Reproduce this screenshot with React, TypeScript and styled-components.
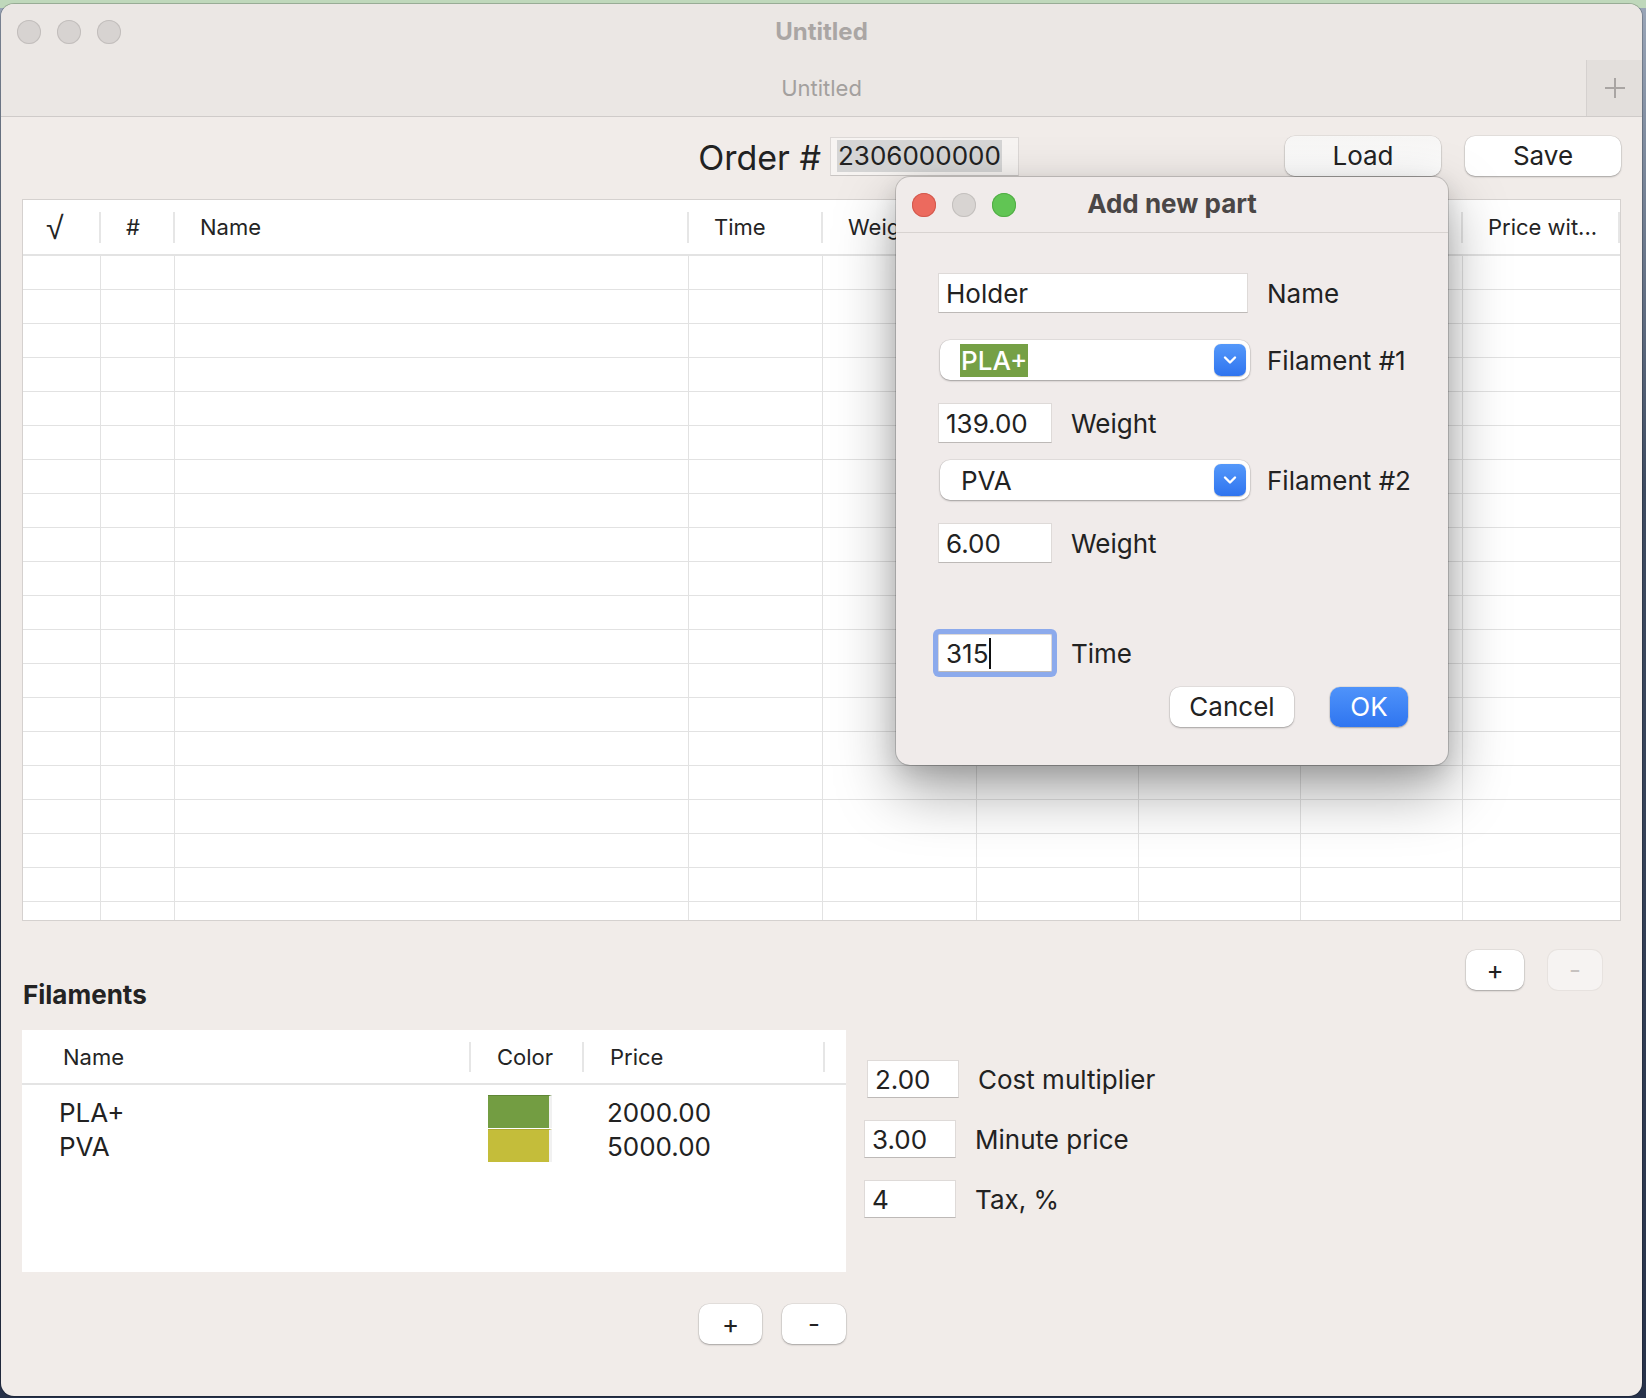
import React from "react";
import styled, { createGlobalStyle } from "styled-components";

const GlobalStyle = createGlobalStyle`
  html, body { margin: 0; padding: 0; }
  body {
    width: 1646px;
    height: 1398px;
    overflow: hidden;
    font-family: Inter, "Noto Sans", "Liberation Sans", sans-serif;
    color: #222;
    background: #2f3a4e;
  }
  *, *::before, *::after { box-sizing: border-box; }
`;

const Desktop = styled.div`
  width: 1646px;
  height: 1398px;
  padding: 4px 4px 2px 1px;
  background:
    linear-gradient(to bottom, #bfd8bb 0px, #bfd8bb 8px, transparent 8px),
    linear-gradient(to bottom, #9aa6b8 0%, #3d4a60 35%, #27324a 100%);
`;

const Window = styled.div`
  position: relative;
  width: 1641px;
  height: 1392px;
  display: flex;
  flex-direction: column;
  background: #f1ece9;
  border-radius: 13px;
  overflow: hidden;
  box-shadow: 0 0 0 1px rgba(0, 0, 0, 0.2);
`;

const TitleBar = styled.div`
  height: 56px;
  flex-shrink: 0;
  display: grid;
  grid-template-columns: 1fr auto 1fr;
  align-items: center;
  padding: 0 16px;
  background: #ebe7e4;
`;

const Lights = styled.div`
  display: flex;
  gap: 16px;
`;

const Light = styled.span<{ $fill: string; $edge: string }>`
  width: 24px;
  height: 24px;
  border-radius: 50%;
  background: ${(p) => p.$fill};
  box-shadow: inset 0 0 0 1px ${(p) => p.$edge};
`;

const WindowTitle = styled.div`
  font-size: 24px;
  font-weight: 700;
  color: #aaa6a4;
  margin-top: -2px;
`;

const TabBar = styled.div`
  height: 57px;
  flex-shrink: 0;
  display: grid;
  grid-template-columns: 56px 1fr 56px;
  background: #ebe7e4;
  border-bottom: 1px solid #cfcbc9;
`;

const TabLabel = styled.div`
  display: flex;
  align-items: center;
  justify-content: center;
  font-size: 22px;
  color: #a3a09e;
`;

const NewTabButton = styled.div`
  display: flex;
  align-items: center;
  justify-content: center;
  background: #e3dfdc;
  border-left: 1px solid #d5d1cf;
`;

const Content = styled.div`
  flex: 1;
  display: flex;
  flex-direction: column;
  padding: 0 21px;
`;

const OrderRow = styled.div`
  margin-top: 19px;
  height: 40px;
  display: flex;
  align-items: center;
  justify-content: flex-end;
`;

const OrderGroup = styled.div`
  display: flex;
  align-items: center;
  gap: 9px;
  margin-right: 266px;
`;

const OrderLabel = styled.div`
  font-size: 34px;
  color: #222;
  margin-top: 2px;
`;

const OrderField = styled.div`
  width: 189px;
  height: 39px;
  display: flex;
  align-items: center;
  padding-left: 6px;
  background: #f7f4f2;
  border: 1px solid #dcd8d6;
  border-bottom-color: #c9c5c3;
`;

const SelectedText = styled.span`
  font-size: 26px;
  line-height: 32px;
  padding: 0 1px;
  background: #d5d5d5;
`;

type Tone = "plain" | "muted" | "primary" | "disabled";

const PushButton = styled.div<{ $w: number; $tone?: Tone }>`
  width: ${(p) => p.$w}px;
  height: 40px;
  flex-shrink: 0;
  border-radius: 10px;
  display: flex;
  align-items: center;
  justify-content: center;
  font-size: 26px;
  padding-bottom: 2px;
  color: ${(p) =>
    p.$tone === "primary" ? "#fff" : p.$tone === "disabled" ? "#c6c2c0" : "#222"};
  background: ${(p) =>
    p.$tone === "primary"
      ? "linear-gradient(to bottom, #4f93fa, #2f75f0)"
      : p.$tone === "disabled"
      ? "#f6f3f2"
      : p.$tone === "muted"
      ? "linear-gradient(to bottom, #f7f6f5, #fdfdfd)"
      : "#ffffff"};
  box-shadow: ${(p) =>
    p.$tone === "disabled"
      ? "0 0 0 1px rgba(0,0,0,0.04)"
      : "0 1px 2px rgba(0,0,0,0.28), 0 0 0 0.5px rgba(0,0,0,0.1)"};
`;

const partsCols = "78px 74px 514px 134px 154px 162px 162px 162px 1fr";

const PartsTable = styled.div`
  margin-top: 23px;
  height: 722px;
  flex-shrink: 0;
  background: #fff;
  border: 1px solid #d5d1cf;
  overflow: hidden;
`;

const PartsHeader = styled.div`
  display: grid;
  grid-template-columns: ${partsCols};
  height: 56px;
  border-bottom: 2px solid #e3e3e3;
`;

const HeaderCell = styled.div<{ $sep?: boolean; $pad?: number }>`
  position: relative;
  display: flex;
  align-items: center;
  padding-left: ${(p) => p.$pad ?? 24}px;
  font-size: 22px;
  color: #242424;
  white-space: nowrap;
  overflow: hidden;
  &::after {
    content: "";
    display: ${(p) => (p.$sep ? "block" : "none")};
    position: absolute;
    right: 0;
    top: 12px;
    bottom: 11px;
    width: 2px;
    background: #e6e6e6;
  }
`;

const Radical = styled.span`
  font-family: "DejaVu Sans", "Liberation Sans", sans-serif;
  font-size: 32px;
  font-weight: 200;
  line-height: 1;
  margin-top: 1px;
`;

const PartsRow = styled.div`
  display: grid;
  grid-template-columns: ${partsCols};
  height: 34px;
  border-bottom: 1px solid #e2e2e2;
`;

const PartsCell = styled.div`
  border-right: 1px solid #e2e2e2;
  &:last-child {
    border-right: none;
  }
`;

const SectionRow = styled.div`
  display: flex;
  justify-content: space-between;
  align-items: flex-start;
  padding-top: 29px;
`;

const SectionHeading = styled.div`
  margin-top: 30px;
  height: 30px;
  line-height: 30px;
  font-size: 26px;
  font-weight: 700;
  color: #232323;
  padding-left: 1px;
`;

const ButtonPair = styled.div<{ $gap: number; $inset?: number }>`
  display: flex;
  gap: ${(p) => p.$gap}px;
  margin-right: ${(p) => p.$inset ?? 0}px;
`;

const BottomArea = styled.div`
  display: grid;
  grid-template-columns: 824px 1fr;
  margin-top: 20px;
`;

const FilamentsPane = styled.div`
  display: flex;
  flex-direction: column;
  align-items: stretch;
`;

const filCols = "449px 113px 241px 1fr";

const FilamentTable = styled.div`
  height: 242px;
  background: #fff;
`;

const FilamentHeader = styled.div`
  display: grid;
  grid-template-columns: ${filCols};
  height: 55px;
  border-bottom: 2px solid #e4e4e4;
`;

const FilamentBody = styled.div`
  padding-top: 10px;
`;

const FilamentRow = styled.div`
  display: grid;
  grid-template-columns: ${filCols};
  height: 34px;
  align-items: center;
  font-size: 26px;
  color: #222;
`;

const TextCell = styled.div<{ $pad: number }>`
  padding-left: ${(p) => p.$pad}px;
`;

const SwatchCell = styled.div`
  height: 34px;
  padding-left: 17px;
  display: flex;
  align-items: flex-start;
`;

const Swatch = styled.div<{ $color: string; $edge: string }>`
  width: 64px;
  height: 33px;
  background: ${(p) => p.$color};
  border-top: 1px solid ${(p) => p.$edge};
  border-right: 3px solid #f1f1f1;
  background-clip: padding-box;
`;

const PaneActions = styled.div`
  display: flex;
  justify-content: flex-end;
  margin-top: 32px;
`;

const SettingsPane = styled.div`
  display: flex;
  flex-direction: column;
  gap: 22px;
  padding-top: 30px;
  padding-left: 18px;
`;

const SettingRow = styled.div<{ $shift?: number }>`
  display: flex;
  align-items: center;
  gap: 19px;
  margin-left: ${(p) => p.$shift ?? 0}px;
`;

const Label = styled.div`
  font-size: 26px;
  color: #222;
  white-space: nowrap;
`;

const TextBox = styled.div<{ $w: number; $h?: number; $focus?: boolean }>`
  width: ${(p) => p.$w}px;
  height: ${(p) => p.$h ?? 40}px;
  flex-shrink: 0;
  display: flex;
  align-items: center;
  padding-left: 7px;
  font-size: 26px;
  color: #222;
  background: #fff;
  border: 1px solid #dedad8;
  border-bottom-color: #bdb9b7;
  box-shadow: ${(p) => (p.$focus ? "0 0 0 5px #8caaec" : "none")};
  border-radius: ${(p) => (p.$focus ? "2px" : "0")};
`;

const Caret = styled.span`
  display: inline-block;
  width: 2px;
  height: 31px;
  margin-left: 1px;
  background: #111;
`;

const Dialog = styled.div`
  position: absolute;
  left: 895px;
  top: 173px;
  width: 552px;
  height: 588px;
  display: flex;
  flex-direction: column;
  border-radius: 14px;
  background: #f0ebea;
  box-shadow:
    0 0 0 1px rgba(0, 0, 0, 0.16),
    0 26px 60px rgba(0, 0, 0, 0.36),
    0 8px 22px rgba(0, 0, 0, 0.12);
`;

const DialogTitleBar = styled.div`
  height: 56px;
  flex-shrink: 0;
  display: grid;
  grid-template-columns: 1fr auto 1fr;
  align-items: center;
  padding: 0 16px;
  border-bottom: 1px solid #d8d3d1;
`;

const DialogTitle = styled.div`
  font-size: 26px;
  font-weight: 700;
  color: #4a4646;
  margin-top: -3px;
`;

const DialogBody = styled.div`
  display: flex;
  flex-direction: column;
  padding: 0 40px 0 42px;
`;

const FormRow = styled.div<{ $mt: number; $gap: number; $shift?: number }>`
  display: flex;
  align-items: center;
  gap: ${(p) => p.$gap}px;
  margin-top: ${(p) => p.$mt}px;
  margin-left: ${(p) => p.$shift ?? 0}px;
`;

const Popup = styled.div`
  width: 310px;
  height: 40px;
  flex-shrink: 0;
  display: flex;
  align-items: center;
  justify-content: space-between;
  padding: 0 4px 0 20px;
  border-radius: 10px;
  background: #fff;
  box-shadow: 0 1px 2px rgba(0, 0, 0, 0.3), 0 0 0 0.5px rgba(0, 0, 0, 0.1);
`;

const PopupValue = styled.span<{ $selected?: boolean }>`
  font-size: 26px;
  line-height: 33px;
  height: 33px;
  padding: 0 1px;
  font-weight: ${(p) => (p.$selected ? 500 : 400)};
  color: ${(p) => (p.$selected ? "#fff" : "#222")};
  background: ${(p) => (p.$selected ? "#75a045" : "transparent")};
`;

const PopupArrow = styled.div`
  width: 32px;
  height: 32px;
  border-radius: 7px;
  display: flex;
  align-items: center;
  justify-content: center;
  background: linear-gradient(to bottom, #5498fa, #2f74ef);
  box-shadow: 0 0.5px 1px rgba(0, 0, 0, 0.25);
`;

const DialogActions = styled.div`
  display: flex;
  justify-content: flex-end;
  gap: 36px;
  margin-top: 15px;
`;

const Chevron = () => (
  <svg width="14" height="10" viewBox="0 0 14 10">
    <polyline
      points="2,2.5 7,7.5 12,2.5"
      fill="none"
      stroke="#fff"
      strokeWidth="2.4"
      strokeLinecap="round"
      strokeLinejoin="round"
    />
  </svg>
);

const PlusGlyph = () => (
  <svg width="22" height="22" viewBox="0 0 22 22">
    <path d="M11 1 V21 M1 11 H21" stroke="#a9a5a3" strokeWidth="2" />
  </svg>
);

// Labels of the columns hidden behind the dialog are left empty.
const partHeaders = ["√", "#", "Name", "Time", "Weight", "", "", "", "Price wit..."];

const filaments = [
  { name: "PLA+", color: "#739d42", edge: "#5f8636", price: "2000.00" },
  { name: "PVA", color: "#c4bd3a", edge: "#b0aa33", price: "5000.00" },
];

const settings = [
  { value: "2.00", label: "Cost multiplier", shift: 3 },
  { value: "3.00", label: "Minute price", shift: 0 },
  { value: "4", label: "Tax, %", shift: 0 },
];

export default function App() {
  const rows = Array.from({ length: 20 }, (_, i) => i);
  return (
    <>
      <GlobalStyle />
      <Desktop>
        <Window>
          <TitleBar>
            <Lights>
              <Light $fill="#d7d3d1" $edge="#c2bebc" />
              <Light $fill="#d7d3d1" $edge="#c2bebc" />
              <Light $fill="#d7d3d1" $edge="#c2bebc" />
            </Lights>
            <WindowTitle>Untitled</WindowTitle>
            <span />
          </TitleBar>
          <TabBar>
            <span />
            <TabLabel>Untitled</TabLabel>
            <NewTabButton>
              <PlusGlyph />
            </NewTabButton>
          </TabBar>

          <Content>
            <OrderRow>
              <OrderGroup>
                <OrderLabel>Order #</OrderLabel>
                <OrderField>
                  <SelectedText>2306000000</SelectedText>
                </OrderField>
              </OrderGroup>
              <ButtonPair $gap={24}>
                <PushButton $w={156} $tone="muted">
                  Load
                </PushButton>
                <PushButton $w={156}>Save</PushButton>
              </ButtonPair>
            </OrderRow>

            <PartsTable>
              <PartsHeader>
                {partHeaders.map((h, i) => (
                  <HeaderCell key={i} $sep $pad={i === 0 ? 23 : 25}>
                    {i === 0 ? <Radical>{h}</Radical> : h}
                  </HeaderCell>
                ))}
              </PartsHeader>
              {rows.map((r) => (
                <PartsRow key={r}>
                  {partHeaders.map((_, i) => (
                    <PartsCell key={i} />
                  ))}
                </PartsRow>
              ))}
            </PartsTable>

            <SectionRow>
              <SectionHeading>Filaments</SectionHeading>
              <ButtonPair $gap={24} $inset={19}>
                <PushButton $w={58}>+</PushButton>
                <PushButton $w={54} $tone="disabled">
                  -
                </PushButton>
              </ButtonPair>
            </SectionRow>

            <BottomArea>
              <FilamentsPane>
                <FilamentTable>
                  <FilamentHeader>
                    <HeaderCell $sep $pad={41}>
                      Name
                    </HeaderCell>
                    <HeaderCell $sep $pad={26}>
                      Color
                    </HeaderCell>
                    <HeaderCell $sep $pad={26}>
                      Price
                    </HeaderCell>
                    <HeaderCell />
                  </FilamentHeader>
                  <FilamentBody>
                    {filaments.map((f) => (
                      <FilamentRow key={f.name}>
                        <TextCell $pad={37}>{f.name}</TextCell>
                        <SwatchCell>
                          <Swatch $color={f.color} $edge={f.edge} />
                        </SwatchCell>
                        <TextCell $pad={23}>{f.price}</TextCell>
                        <span />
                      </FilamentRow>
                    ))}
                  </FilamentBody>
                </FilamentTable>
                <PaneActions>
                  <ButtonPair $gap={20}>
                    <PushButton $w={63}>+</PushButton>
                    <PushButton $w={64}>-</PushButton>
                  </ButtonPair>
                </PaneActions>
              </FilamentsPane>

              <SettingsPane>
                {settings.map((s) => (
                  <SettingRow key={s.label} $shift={s.shift}>
                    <TextBox $w={92} $h={38}>
                      {s.value}
                    </TextBox>
                    <Label>{s.label}</Label>
                  </SettingRow>
                ))}
              </SettingsPane>
            </BottomArea>
          </Content>

          <Dialog>
            <DialogTitleBar>
              <Lights>
                <Light $fill="#ec6a5e" $edge="#d25a4f" />
                <Light $fill="#d8d4d2" $edge="#c4c0be" />
                <Light $fill="#61c554" $edge="#52ad46" />
              </Lights>
              <DialogTitle>Add new part</DialogTitle>
              <span />
            </DialogTitleBar>
            <DialogBody>
              <FormRow $mt={40} $gap={19}>
                <TextBox $w={310}>Holder</TextBox>
                <Label>Name</Label>
              </FormRow>
              <FormRow $mt={27} $gap={17} $shift={2}>
                <Popup>
                  <PopupValue $selected>PLA+</PopupValue>
                  <PopupArrow>
                    <Chevron />
                  </PopupArrow>
                </Popup>
                <Label>Filament #1</Label>
              </FormRow>
              <FormRow $mt={23} $gap={19}>
                <TextBox $w={114}>139.00</TextBox>
                <Label>Weight</Label>
              </FormRow>
              <FormRow $mt={17} $gap={17} $shift={2}>
                <Popup>
                  <PopupValue>PVA</PopupValue>
                  <PopupArrow>
                    <Chevron />
                  </PopupArrow>
                </Popup>
                <Label>Filament #2</Label>
              </FormRow>
              <FormRow $mt={23} $gap={19}>
                <TextBox $w={114}>6.00</TextBox>
                <Label>Weight</Label>
              </FormRow>
              <FormRow $mt={71} $gap={19}>
                <TextBox $w={114} $h={38} $focus>
                  315
                  <Caret />
                </TextBox>
                <Label>Time</Label>
              </FormRow>
              <DialogActions>
                <PushButton $w={124}>Cancel</PushButton>
                <PushButton $w={78} $tone="primary">
                  OK
                </PushButton>
              </DialogActions>
            </DialogBody>
          </Dialog>
        </Window>
      </Desktop>
    </>
  );
}
